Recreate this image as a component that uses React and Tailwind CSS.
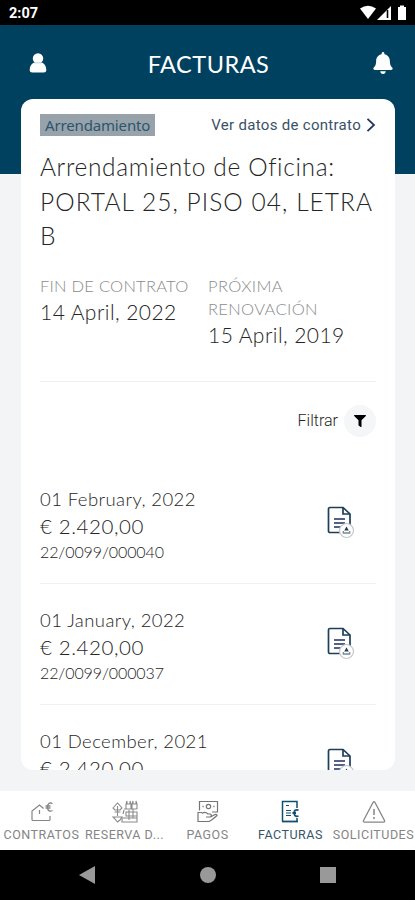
import { FaBell, FaFilter } from "react-icons/fa";

const facturas = [
  { fecha: "01 February, 2022", importe: "€ 2.420,00", numero: "22/0099/000040" },
  { fecha: "01 January, 2022", importe: "€ 2.420,00", numero: "22/0099/000037" },
  { fecha: "01 December, 2021", importe: "€ 2.420,00" },
];

const DocumentoIcon = () => (
  <svg width="28" height="33" viewBox="0 0 28 33" fill="none" className="shrink-0">
    <path d="M3 1.5H16L23 8V26.5H3A1.5 1.5 0 0 1 1.5 25V3A1.5 1.5 0 0 1 3 1.5Z" stroke="#1d3f58" strokeWidth="1.7" />
    <path d="M16 1.5V8H23" stroke="#1d3f58" strokeWidth="1.7" />
    <path d="M7 13H18M7 17H18M7 21H15" stroke="#1d2f5c" strokeWidth="1.5" />
    <circle cx="19.5" cy="24.5" r="7" fill="#fff" stroke="#c2c6ca" strokeWidth="1.2" />
    <path d="M19.5 20.5L21.8 24.5H17.2Z" fill="#1d3f58" />
    <path d="M16.3 25V27H22.7V25" stroke="#7a8794" strokeWidth="1.3" />
  </svg>
);

const ContratosIcon = () => (
  <svg width="24" height="24" viewBox="0 0 24 24" fill="none" stroke="#858585" strokeWidth="1.2">
    <path d="M13.5 8.5L9.5 5L2 11V19.5Q2 20.5 3 20.5H19Q20 20.5 20 19.5V16" />
    <path d="M9.5 10V14" />
    <path d="M22.5 3.5C19.5 2 17.5 4 17.5 7C17.5 10.5 19.5 12 22.5 10.5M15.5 6H20.5M15.5 8H20.5" strokeWidth="1.3" />
  </svg>
);

const ReservaIcon = () => (
  <svg width="26" height="24" viewBox="0 0 26 24" fill="none" stroke="#8a8a8a" strokeWidth="1.1">
    <path d="M1 8L5.5 3L10 8L8 10H3ZM5.5 6V16M2.5 12H8.5M1 17H10L8 20L5.5 22L2 18Z" />
    <path d="M14 9V4L15 1V4H18V1L19 4V9M20 9V4L21 1V4H24V1L25 4V9M12 9H25M14 12H25V16H14ZM10 18V22H25V13M10 18H25M12 10L11 14M17 10V20M21 9V18" />
  </svg>
);

const PagosIcon = () => (
  <svg width="24" height="24" viewBox="0 0 24 24" fill="none" stroke="#757575" strokeWidth="1.2">
    <path d="M3.5 10.5V1.5H21.5V12H16" />
    <circle cx="12.5" cy="6.5" r="2.2" />
    <path d="M6.5 6.5H7.7M17.3 6.5H18.5" strokeWidth="1.5" />
    <path d="M6 12.5H2V21.5H13Q15.5 20.5 21 15.5Q20.5 13.5 18 15L14.5 17M6 13.5Q9 11 12 14H14.5Q16 15.5 14.5 17H10" />
  </svg>
);

const FacturasIcon = () => (
  <svg width="24" height="24" viewBox="0 0 24 24" fill="none" stroke="#10506f" strokeWidth="1.5">
    <path d="M18 8V1.5H3.5V21.5M18 18V21.5" />
    <path d="M3 21.5H19" strokeWidth="1.8" />
    <path d="M7 5.5H10M7 10.5H12M7 13H12M7 15.5H12" strokeWidth="1.2" />
    <path d="M19.5 10.2C16.5 9.2 15.2 10.5 15.2 13C15.2 15.5 16.5 17 19.5 16M13.5 13H17" strokeWidth="1.8" />
  </svg>
);

const SolicitudesIcon = () => (
  <svg width="24" height="24" viewBox="0 0 24 24" fill="none" stroke="#858585" strokeWidth="1.3" strokeLinejoin="round">
    <path d="M11 2.5Q12 1 13 2.5L22.5 20.5Q23 22.2 21.5 22.2H2.5Q1 22.2 1.5 20.5Z" />
    <path d="M12 9V15M12 17V19" strokeWidth="1.5" />
  </svg>
);

const pestanas = [
  { nombre: "CONTRATOS", Icono: ContratosIcon },
  { nombre: "RESERVA D...", Icono: ReservaIcon },
  { nombre: "PAGOS", Icono: PagosIcon },
  { nombre: "FACTURAS", Icono: FacturasIcon, activa: true },
  { nombre: "SOLICITUDES", Icono: SolicitudesIcon },
];

const App = () => {
  return (
    <div className="flex h-[900px] w-[415px] flex-col overflow-hidden bg-[#f2f4f6] font-['Lato',sans-serif] text-[#252525]">
      <div className="flex h-[25px] shrink-0 items-center justify-between bg-black pr-[7px] pl-[9px] text-white">
        <span className="pt-[3px] font-['Roboto',sans-serif] text-[14.5px] font-bold">2:07</span>
        <svg width="49" height="17" viewBox="0 0 49 17" fill="white">
          <path d="M1 4.5Q9 -1 17 4.5L9 15Z" />
          <path d="M32 2V16H18Z" />
          <path d="M28.5 6V14" stroke="black" strokeWidth="1.6" />
          <path d="M39 3H41V1.5H45V3H47V16H39Z" />
        </svg>
      </div>

      <header className="flex h-[149px] shrink-0 items-start justify-between bg-[#00415f] pt-6 pr-[21px] pl-[29px] text-white">
        <svg width="18" height="24" viewBox="0 0 18 24" fill="white" className="mt-[3px]">
          <circle cx="9" cy="6.5" r="5.2" />
          <path d="M4 11H14Q17.3 13.5 17.3 18Q17.3 20.5 14.5 20.5H3.5Q0.7 20.5 0.7 18Q0.7 13.5 4 11Z" />
          <path d="M4.5 10.8H13.5" stroke="#a9bcc7" strokeWidth="0.7" />
        </svg>
        <h1 className="pr-[2px] text-[23.5px] leading-[30px] tracking-[0.5px]">FACTURAS</h1>
        <FaBell size={22} className="mt-[3px]" />
      </header>

      <main className="-mt-[75px] mr-[20px] ml-[21px] h-[671px] shrink-0 overflow-hidden rounded-xl bg-white px-[19px] pt-[14px]">
        <div className="flex h-[24px] items-center justify-between text-[#3a5268]">
          <span className="h-[22px] bg-[#98a2ab] px-[5px] font-['Noto_Sans',sans-serif] text-[15px] leading-[22px] tracking-[-0.15px] text-[#2b566d]">Arrendamiento</span>
          <span className="flex items-center gap-[5px] font-['Roboto',sans-serif] text-[15px] tracking-[0.3px]">
            Ver datos de contrato
            <svg width="10" height="14" viewBox="0 0 10 14" fill="none" stroke="#24365a" strokeWidth="1.8">
              <path d="M1.5 0.8L8 7L1.5 13.2" />
            </svg>
          </span>
        </div>
        <h2 className="mt-[13px] text-[24.5px] leading-[34.5px] font-light whitespace-nowrap">
          <span className="tracking-[0.65px]">Arrendamiento de Oficina:</span><br />
          <span className="tracking-[1.05px]">PORTAL 25, PISO 04, LETRA</span><br />
          B
        </h2>

        <div className="mt-[21px] flex h-[107px] border-b border-[#eeeeee]">
          <div className="w-[168px]">
            <div className="text-[16.5px] leading-[23px] font-light tracking-[0.25px] whitespace-nowrap text-[#8b8b8b]">FIN DE CONTRATO</div>
            <div className="text-[21px] leading-[28px] font-light tracking-[0.45px]">14 April, 2022</div>
          </div>
          <div>
            <div className="text-[16.5px] leading-[23px] font-light tracking-[0.35px] text-[#8b8b8b]">PRÓXIMA<br />RENOVACIÓN</div>
            <div className="text-[21px] leading-[28px] font-light tracking-[0.45px]">15 April, 2019</div>
          </div>
        </div>

        <div className="mt-[23px] flex items-center justify-end gap-[6px]">
          <span className="font-['Roboto',sans-serif] text-[16px] font-light">Filtrar</span>
          <div className="flex size-8 items-center justify-center rounded-full bg-[#f4f6f7] text-black">
            <FaFilter size={12} />
          </div>
        </div>

        <div className="mt-[26px]">
          {facturas.map((factura) => (
            <div key={factura.fecha} className="flex h-[121px] items-start justify-between border-b border-[#f1f1f1] pt-[23px] pr-[21px]">
              <div>
                <div className="text-[18.5px] leading-[27px] font-light tracking-[0.42px]">{factura.fecha}</div>
                <div className="text-[20.5px] leading-[27px] font-light tracking-[0.6px]">{factura.importe}</div>
                <div className="text-[16px] leading-[23px] font-light tracking-[-0.1px]">{factura.numero}</div>
              </div>
              <div className="pt-[20px]">
                <DocumentoIcon />
              </div>
            </div>
          ))}
        </div>
      </main>

      <nav className="mt-[21px] grid h-[59px] shrink-0 grid-cols-5 bg-white">
        {pestanas.map(({ nombre, Icono, activa }) => (
          <div key={nombre} className="flex flex-col items-center pt-[9px]">
            <Icono />
            <span className={`pt-px font-['Roboto',sans-serif] text-[12.5px] leading-[20px] tracking-[0.5px] whitespace-nowrap ${activa ? "text-[#375569]" : "text-[#858585]"}`}>
              {nombre}
            </span>
          </div>
        ))}
      </nav>

      <div className="flex h-[50px] shrink-0 items-center justify-between bg-black pr-[79px] pl-[79px]">
        <svg width="16" height="18" viewBox="0 0 16 18" fill="#999">
          <path d="M0 9L16 0V18Z" />
        </svg>
        <div className="size-4 rounded-full bg-[#999]" />
        <div className="size-4 bg-[#999]" />
      </div>
    </div>
  );
};

export default App;
